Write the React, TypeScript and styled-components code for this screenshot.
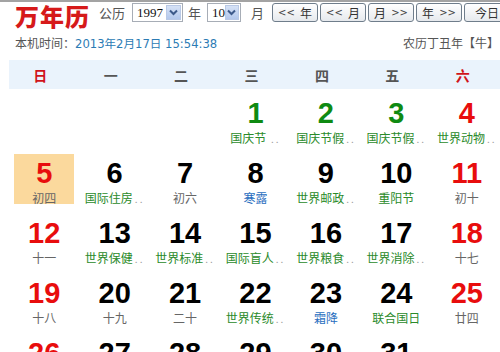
import React from "react";
import styled, { createGlobalStyle } from "styled-components";

const Global = createGlobalStyle`
  html, body { margin: 0; padding: 0; background: #fff; overflow: hidden; }
  body { font-family: "Noto Sans CJK SC", "Noto Sans", sans-serif; }
`;

const Page = styled.div`
  width: 510px;
  border-top: 2px solid #a3a3a3;
`;

const Toolbar = styled.div`
  display: flex;
  align-items: flex-start;
  padding: 1px 0 0 15px;
`;

const Logo = styled.div`
  font-family: "Noto Sans CJK SC", serif;
  font-weight: 900;
  font-size: 24px;
  line-height: 26px;
  letter-spacing: 1px;
  color: #d61a1a;
  margin-right: 9px;
  white-space: nowrap;
`;

const Label = styled.span<{ $ml?: number; $mr?: number }>`
  font-size: 13px;
  line-height: 19px;
  color: #555;
  margin-left: ${(p) => p.$ml ?? 0}px;
  margin-right: ${(p) => p.$mr ?? 0}px;
  white-space: nowrap;
`;

const SelectBox = styled.div<{ $w: number }>`
  box-sizing: border-box;
  width: ${(p) => p.$w}px;
  height: 19px;
  border: 1px solid #a7adb6;
  background: #fff;
  display: flex;
  align-items: center;
  justify-content: space-between;
  padding: 0 1px 0 4px;
`;

const SelectValue = styled.span`
  font-family: "Liberation Serif", "DejaVu Serif", serif;
  font-size: 13px;
  color: #111;
`;

const SelectArrow = styled.span`
  box-sizing: border-box;
  width: 15px;
  height: 15px;
  background: linear-gradient(#d6e2f6, #b3c8ec);
  border: 1px solid #b9c9e6;
  display: flex;
  align-items: center;
  justify-content: center;
`;

const NavGroup = styled.div`
  display: flex;
  gap: 2px;
  margin-left: 8px;
`;

const NavButton = styled.button`
  box-sizing: border-box;
  width: 46px;
  height: 19px;
  padding: 0;
  border: 1px solid #6f7d8b;
  border-radius: 3px;
  background: linear-gradient(#ffffff, #e6e9ed);
  font-family: "Noto Sans CJK SC", sans-serif;
  font-size: 12px;
  line-height: 17px;
  color: #333;
  white-space: nowrap;
  display: flex;
  align-items: center;
  justify-content: center;
  gap: 5px;
`;

const Chev = styled.span`
  font-family: "DejaVu Sans", sans-serif;
  font-size: 10px;
  color: #444;
`;

const InfoRow = styled.div`
  display: flex;
  justify-content: space-between;
  width: 484px;
  margin-top: 5px;
  padding-left: 15px;
  font-size: 12px;
  line-height: 18px;
  color: #555;
`;

const ClockValue = styled.span`
  font-family: "DejaVu Sans", "Noto Sans CJK SC", sans-serif;
  color: #2b7bb4;
  font-size: 11.6px;
`;

const Calendar = styled.div`
  margin: 7px 0 0 9px;
  width: 493px;
`;

const WeekHeader = styled.div`
  display: grid;
  grid-template-columns: repeat(7, 1fr);
  height: 29px;
  background: #eaf3fc;
  align-items: center;
`;

const WeekDay = styled.div<{ $weekend: boolean }>`
  text-align: center;
  padding-right: 8px;
  font-size: 14px;
  font-weight: 700;
  color: ${(p) => (p.$weekend ? "#d0141a" : "#555")};
`;

const DayGrid = styled.div`
  display: grid;
  grid-template-columns: repeat(7, 1fr);
  row-gap: 10px;
  margin-top: 5px;
`;

const Cell = styled.div<{ $today?: boolean }>`
  box-sizing: border-box;
  height: 50px;
  margin: 0 5px;
  padding-top: 5px;
  display: flex;
  flex-direction: column;
  align-items: center;
  background: ${(p) => (p.$today ? "#fbd99d" : "transparent")};
`;

const DayNum = styled.div<{ $tone: "red" | "green" | "black" }>`
  font-family: "Liberation Sans", Arial, sans-serif;
  font-weight: 700;
  font-size: 29px;
  line-height: 28px;
  color: ${(p) =>
    p.$tone === "red" ? "#e80d0d" : p.$tone === "green" ? "#0f8a12" : "#000"};
`;

const DayLabel = styled.div<{ $tone: "holiday" | "term" | "lunar" }>`
  margin-top: 3px;
  font-size: 12px;
  line-height: 15px;
  white-space: nowrap;
  color: ${(p) =>
    p.$tone === "holiday" ? "#2a8a2a" : p.$tone === "term" ? "#2a6fc0" : "#666"};
`;

const More = styled.span`
  color: #9a9a9a;
  font-size: 10px;
  letter-spacing: 2px;
  margin-left: 2px;
`;

type Day = {
  n: number;
  label: string;
  tone: "holiday" | "term" | "lunar";
  more?: boolean;
  fest?: boolean;
  today?: boolean;
};

const D = (
  n: number,
  label: string,
  tone: Day["tone"] = "lunar",
  more = false,
  extra: Partial<Day> = {}
): Day => ({ n, label, tone, more, ...extra });

const days: (Day | null)[] = [
  null,
  null,
  null,
  D(1, "国庆节 ", "holiday", true, { fest: true }),
  D(2, "国庆节假", "holiday", true, { fest: true }),
  D(3, "国庆节假", "holiday", true, { fest: true }),
  D(4, "世界动物", "holiday", true),
  D(5, "初四", "lunar", false, { today: true }),
  D(6, "国际住房", "holiday", true),
  D(7, "初六"),
  D(8, "寒露", "term"),
  D(9, "世界邮政", "holiday", true),
  D(10, "重阳节", "holiday"),
  D(11, "初十"),
  D(12, "十一"),
  D(13, "世界保健", "holiday", true),
  D(14, "世界标准", "holiday", true),
  D(15, "国际盲人", "holiday", true),
  D(16, "世界粮食", "holiday", true),
  D(17, "世界消除", "holiday", true),
  D(18, "十七"),
  D(19, "十八"),
  D(20, "十九"),
  D(21, "二十"),
  D(22, "世界传统", "holiday", true),
  D(23, "霜降", "term"),
  D(24, "联合国日", "holiday"),
  D(25, "廿四"),
  D(26, "廿五"),
  D(27, "廿六"),
  D(28, "廿七"),
  D(29, "廿八"),
  D(30, "廿九"),
  D(31, "世界勤俭", "holiday", true),
  null,
];

const weekDays = ["日", "一", "二", "三", "四", "五", "六"];

const Arrow = () => (
  <svg width="9" height="7" viewBox="0 0 9 7">
    <polyline points="1,1.5 4.5,5 8,1.5" fill="none" stroke="#3d5a8a" strokeWidth="2" />
  </svg>
);

export default function App() {
  return (
    <Page>
      <Global />
      <Toolbar>
        <Logo>万年历</Logo>
        <Label $mr={7}>公历</Label>
        <SelectBox $w={54}>
          <SelectValue>1997</SelectValue>
          <SelectArrow>
            <Arrow />
          </SelectArrow>
        </SelectBox>
        <Label $ml={5} $mr={6}>年</Label>
        <SelectBox $w={34}>
          <SelectValue>10</SelectValue>
          <SelectArrow>
            <Arrow />
          </SelectArrow>
        </SelectBox>
        <Label $ml={10}>月</Label>
        <NavGroup>
          <NavButton><Chev>&lt;&lt;</Chev>年</NavButton>
          <NavButton><Chev>&lt;&lt;</Chev>月</NavButton>
          <NavButton>月<Chev>&gt;&gt;</Chev></NavButton>
          <NavButton>年<Chev>&gt;&gt;</Chev></NavButton>
          <NavButton>今日</NavButton>
        </NavGroup>
      </Toolbar>
      <InfoRow>
        <span>
          本机时间：<ClockValue>2013年2月17日 15:54:38</ClockValue>
        </span>
        <span>农历丁丑年【牛】</span>
      </InfoRow>
      <Calendar>
        <WeekHeader>
          {weekDays.map((w, i) => (
            <WeekDay key={w} $weekend={i === 0 || i === 6}>
              {w}
            </WeekDay>
          ))}
        </WeekHeader>
        <DayGrid>
          {days.map((d, i) => {
            if (!d) return <Cell key={`e${i}`} />;
            const col = i % 7;
            const tone = col === 0 || col === 6 ? "red" : d.fest ? "green" : "black";
            return (
              <Cell key={d.n} $today={d.today}>
                <DayNum $tone={tone}>{d.n}</DayNum>
                <DayLabel $tone={d.tone}>
                  {d.label}
                  {d.more && <More>..</More>}
                </DayLabel>
              </Cell>
            );
          })}
        </DayGrid>
      </Calendar>
    </Page>
  );
}
